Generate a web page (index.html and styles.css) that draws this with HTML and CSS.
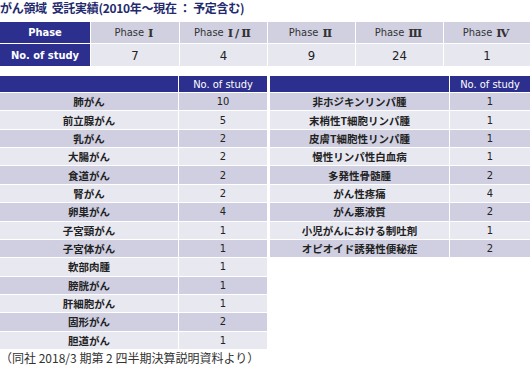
FILE: index.html
```html
<html>
 <head>
   <meta charset="utf-8">
   <link rel="stylesheet" href="styles.css">
 </head>
 <body>
  <div class="page">
    <h1 class="title">がん領域&nbsp; 受託実績(2010年～現在 ： 予定含む)</h1>

    <div class="phase-table">
      <div class="cell head">Phase</div>
      <div class="cell label">Phase <span class="roman">Ⅰ</span></div>
      <div class="cell label">Phase <span class="roman">Ⅰ/Ⅱ</span></div>
      <div class="cell label">Phase <span class="roman">Ⅱ</span></div>
      <div class="cell label">Phase <span class="roman">Ⅲ</span></div>
      <div class="cell label">Phase <span class="roman">Ⅳ</span></div>
      <div class="cell head">No. of study</div>
      <div class="cell value">7</div>
      <div class="cell value">4</div>
      <div class="cell value">9</div>
      <div class="cell value">24</div>
      <div class="cell value">1</div>
    </div>

    <div class="lists">
      <div class="list list-left">
        <div class="row row-head"><div></div><div>No. of study</div></div>
        <div class="row"><div class="name">肺がん</div><div class="num">10</div></div>
        <div class="row"><div class="name">前立腺がん</div><div class="num">5</div></div>
        <div class="row"><div class="name">乳がん</div><div class="num">2</div></div>
        <div class="row"><div class="name">大腸がん</div><div class="num">2</div></div>
        <div class="row"><div class="name">食道がん</div><div class="num">2</div></div>
        <div class="row"><div class="name">腎がん</div><div class="num">2</div></div>
        <div class="row"><div class="name">卵巣がん</div><div class="num">4</div></div>
        <div class="row"><div class="name">子宮頸がん</div><div class="num">1</div></div>
        <div class="row"><div class="name">子宮体がん</div><div class="num">1</div></div>
        <div class="row"><div class="name">軟部肉腫</div><div class="num">1</div></div>
        <div class="row"><div class="name">膀胱がん</div><div class="num">1</div></div>
        <div class="row"><div class="name">肝細胞がん</div><div class="num">1</div></div>
        <div class="row"><div class="name">固形がん</div><div class="num">2</div></div>
        <div class="row"><div class="name">胆道がん</div><div class="num">1</div></div>
      </div>

      <div class="list list-right">
        <div class="row row-head"><div></div><div>No. of study</div></div>
        <div class="row"><div class="name">非ホジキンリンパ腫</div><div class="num">1</div></div>
        <div class="row"><div class="name">末梢性T細胞リンパ腫</div><div class="num">1</div></div>
        <div class="row"><div class="name">皮膚T細胞性リンパ腫</div><div class="num">1</div></div>
        <div class="row"><div class="name">慢性リンパ性白血病</div><div class="num">1</div></div>
        <div class="row"><div class="name">多発性骨髄腫</div><div class="num">2</div></div>
        <div class="row"><div class="name">がん性疼痛</div><div class="num">4</div></div>
        <div class="row"><div class="name">がん悪液質</div><div class="num">2</div></div>
        <div class="row"><div class="name">小児がんにおける制吐剤</div><div class="num">1</div></div>
        <div class="row"><div class="name">オピオイド誘発性便秘症</div><div class="num">2</div></div>
      </div>
    </div>

    <p class="source">（同社 2018/3 期第 2 四半期決算説明資料より）</p>
  </div>
 </body>
</html>
```

FILE: styles.css
```css
body {
  margin: 0;
  background-color: #fff;
  font-family: "DejaVu Sans Condensed", "DejaVu Sans", "Noto Sans CJK JP", sans-serif;
  color: #222;
}

.page {
  width: 530px;
}

.title {
  margin: 0;
  padding-top: 1px;
  height: 21px;
  font-family: "Noto Sans CJK JP", sans-serif;
  font-size: 12px;
  line-height: 14px;
  font-weight: bold;
  color: #1f2b6e;
  letter-spacing: -0.3px;
}

/* phase table */
.phase-table {
  display: grid;
  grid-template-columns: 90px 88px 87px 87px 87px 86px;
  grid-template-rows: 21px 22px;
  gap: 1px;
}

.cell {
  display: flex;
  align-items: center;
  justify-content: center;
}

.cell.head {
  background-color: #2d2f8e;
  color: #fff;
  font-weight: bold;
  font-size: 11px;
}

.cell.label {
  background-color: #d0d0e1;
  color: #333;
  font-size: 11px;
}

.cell.value {
  background-color: #e7e7f0;
  color: #222;
  font-size: 13px;
}

.roman {
  font-family: "DejaVu Serif", serif;
  font-size: 11.5px;
  font-weight: bold;
  letter-spacing: 2px;
  margin-left: 4px;
}

/* lower lists */
.lists {
  display: flex;
  gap: 3px;
  align-items: flex-start;
  margin-top: 10px;
}

.list {
  display: flex;
  flex-direction: column;
  gap: 1px;
}

.list-left {
  width: 267px;
}

.list-right {
  width: 260px;
}

.row {
  display: grid;
  gap: 1px;
  height: 17.36px;
}

.list-left .row {
  grid-template-columns: 178px 88px;
}

.list-right .row {
  grid-template-columns: 179px 80px;
}

.row > div {
  display: flex;
  align-items: center;
  justify-content: center;
  background-color: #e8e8f1;
}

.row:nth-child(even) > div {
  background-color: #cfcfe1;
}

.row .name {
  font-family: "Noto Sans CJK JP", sans-serif;
  font-weight: bold;
  font-size: 10.5px;
  color: #222;
}

.row .num {
  font-size: 11px;
  color: #222;
}

.row-head {
  height: 16px;
}

.row-head > div {
  background-color: #2d2f8e;
  color: #fff;
  font-size: 11px;
}

.source {
  margin: 2px 0 0 0;
  font-family: "Noto Sans CJK JP", sans-serif;
  font-size: 12px;
  line-height: 14px;
  color: #333;
}
```
